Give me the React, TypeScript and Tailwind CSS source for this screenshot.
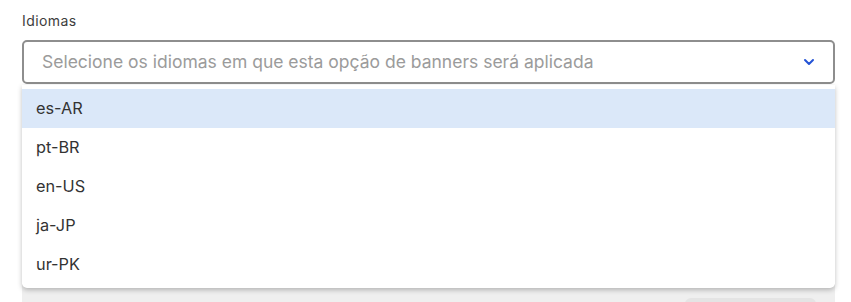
import { useState } from "react";

const languages = ["es-AR", "pt-BR", "en-US", "ja-JP", "ur-PK"];

function Chevron() {
  return (
    <svg width="12" height="8" viewBox="0 0 12 8" fill="none" className="text-[#2453d6]">
      <path d="M2 2l4 4 4-4" stroke="currentColor" strokeWidth="2" strokeLinecap="round" strokeLinejoin="round" />
    </svg>
  );
}

export default function App() {
  const [active] = useState("es-AR");

  return (
    <div className="h-[302px] overflow-hidden bg-white font-['Inter',sans-serif] px-[22px] pt-[12px]">
      <label className="block text-[14px] tracking-[0.4px] text-[#3d3d3d] leading-[18px] mb-[10px]">Idiomas</label>

      <div className="relative">
        {/* Select trigger */}
        <button className="flex h-[44px] w-[813px] items-center justify-between rounded-[5px] border-2 border-[#8e8e8e] bg-white pl-[18px] pr-[18px] text-left">
          <span className="text-[17.5px] leading-[22px] text-[#9b9b9b]">
            Selecione os idiomas em que esta opção de banners será aplicada
          </span>
          <Chevron />
        </button>

        {/* Content below the menu */}
        <div className="mt-[4px] h-[230px] w-[813px] bg-[#efefef] pt-[210px]">
          <div className="flex justify-end pr-[19px]">
            <div className="h-[20px] w-[131px] rounded-t-[6px] bg-[#e4e4e4]" />
          </div>
        </div>

        {/* Dropdown menu */}
        <ul className="absolute left-0 top-[45px] w-[813px] rounded-b-[5px] bg-white py-[4px] shadow-[0_2px_5px_rgba(0,0,0,0.25)]">
          {languages.map((lang) => (
            <li
              key={lang}
              className={`flex h-[39px] items-center px-[14px] text-[16.3px] text-[#333333] ${
                lang === active ? "bg-[#dbe8f9]" : "bg-white"
              }`}
            >
              {lang}
            </li>
          ))}
        </ul>
      </div>
    </div>
  );
}
